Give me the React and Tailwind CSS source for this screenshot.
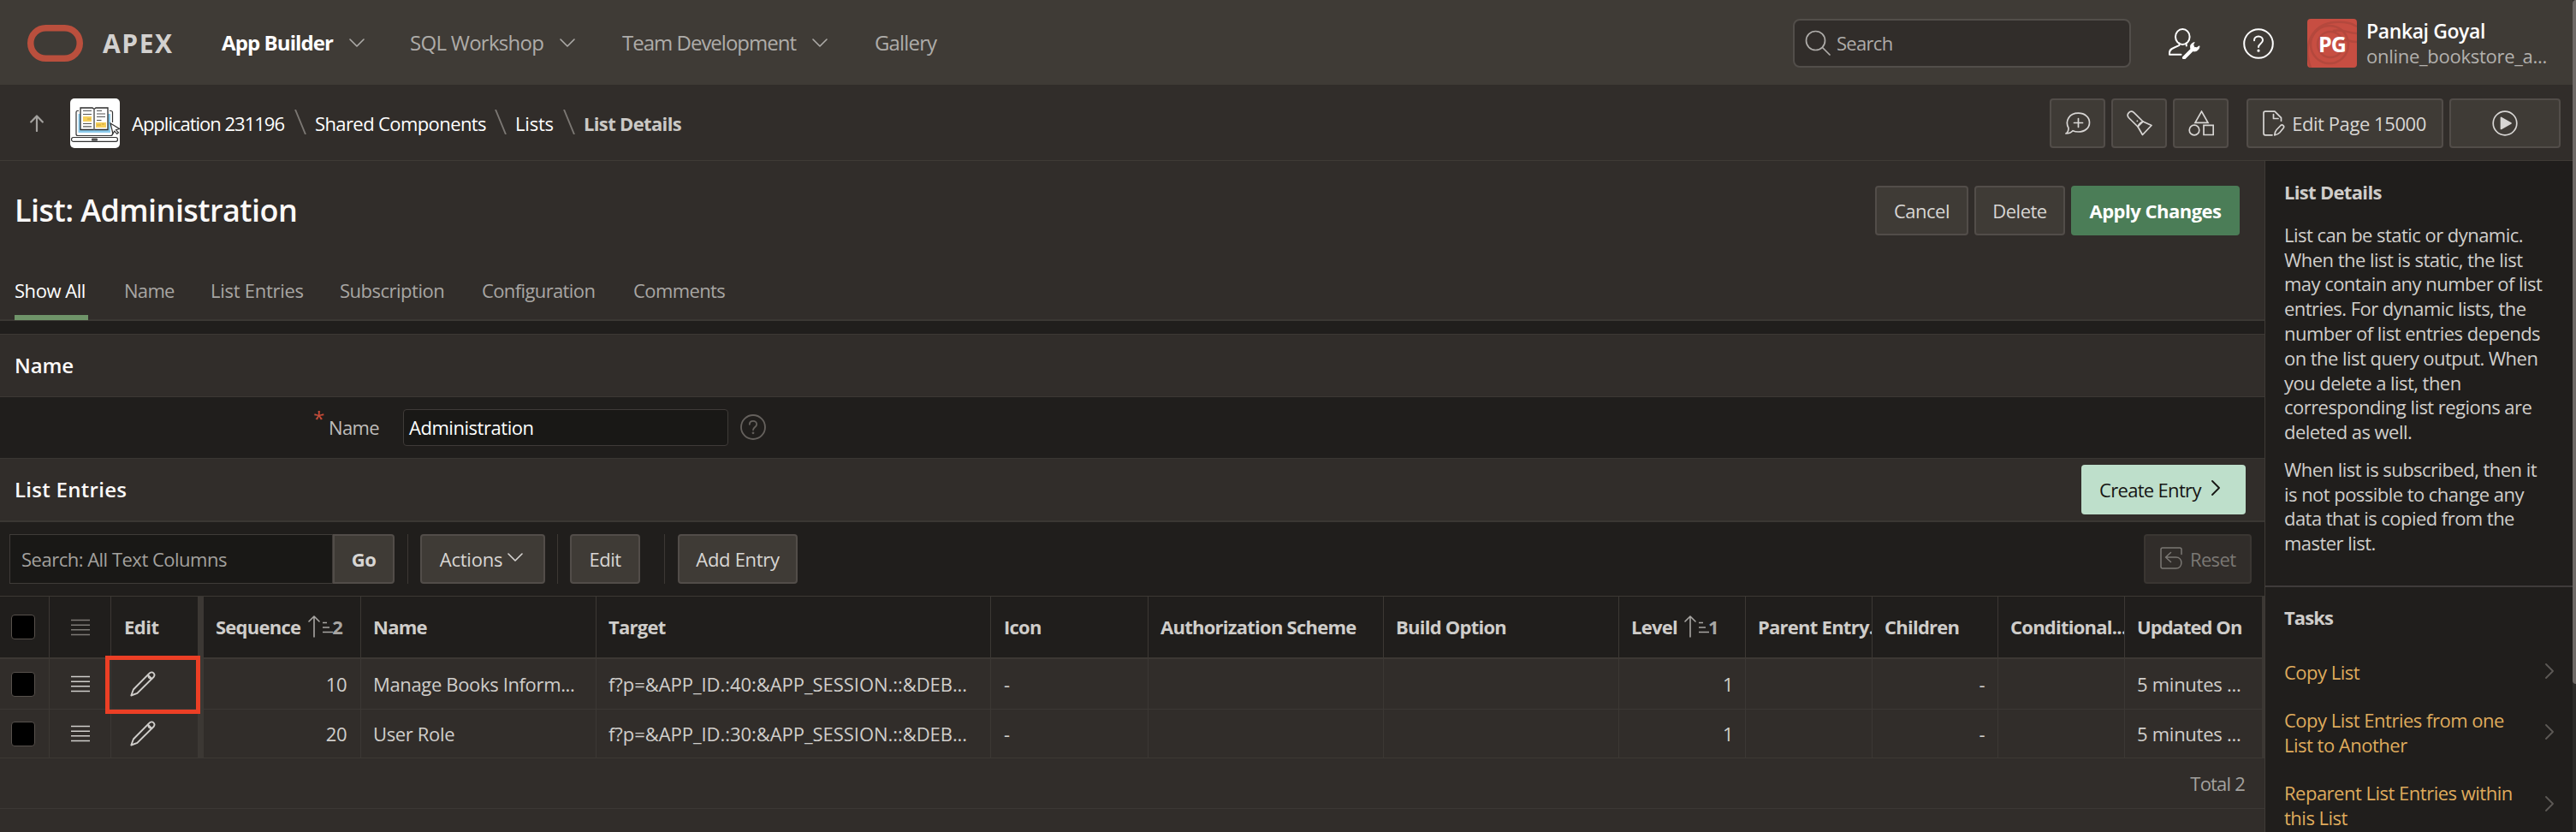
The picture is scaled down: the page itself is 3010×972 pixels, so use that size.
import React from "react";

const Svg = ({ className, children, box = "0 0 24 24", sw = 1.5 }) => (
  <svg viewBox={box} className={`shrink-0 ${className}`} fill="none" stroke="currentColor" strokeWidth={sw} strokeLinecap="round" strokeLinejoin="round">
    {children}
  </svg>
);

const ChevronDown = ({ className }) => (
  <Svg box="0 0 18 10" sw={1.6} className={`h-[10px] w-[18px] ${className || ""}`}>
    <path d="M1 1l8 8 8-8" />
  </Svg>
);

const ChevronRight = ({ className }) => (
  <Svg box="0 0 10 18" sw={1.8} className={`h-[18px] w-[10px] ${className || ""}`}>
    <path d="M1 1l8 8-8 8" />
  </Svg>
);

const Help = ({ className, sw }) => (
  <Svg box="0 0 36 36" sw={sw} className={className}>
    <circle cx="18" cy="18" r="16.8" />
    <path d="M13 14.2c0-2.900 2.200-4.700 5-4.700s5 1.900 5 4.500c0 3.900-5 4-5 8" />
    <circle cx="18" cy="26.200" r="0.600" fill="currentColor" />
  </Svg>
);

const Pencil = () => (
  <Svg box="0 0 30 30" sw={1.900} className="h-[30px] w-[30px]">
    <path d="M1.300 28.500l2.600-7L23 2.200c3.300-2.300 7 1.200 4.700 4.600L8.400 25.900z" />
    <path d="M21 4.300l4.700 4.700M24.500 9c-2-.3-3.300-1.700-3.600-3.700" strokeWidth="1.300" />
  </Svg>
);

const Lines = ({ className = "" }) => (
  <Svg box="0 0 22 20" sw={1.500} className={`h-[20px] w-[22px] ${className}`}>
    <path d="M0 1.500h22M0 7.200h22M0 12.800h22M0 18.400h22" strokeLinecap="butt" />
  </Svg>
);

const SortAsc = ({ n, className }) => (
  <span className={`flex items-center text-[#a8a6a3] ${className}`}>
    <Svg box="0 0 30 26" sw={1.600} className="h-[26px] w-[30px]">
      <path d="M7 25V1.500M1 7l6-6 6 6" />
      <path d="M17 8.500h5M17 14h8M17 19.500h12" strokeLinecap="butt" />
    </Svg>
    <span className="-ml-[2px]">{n}</span>
  </span>
);

const Check = () => <span className="h-[29px] w-[28px] shrink-0 rounded-[4px] border border-[#57514c] bg-black" />;

const Btn = ({ className, children }) => (
  <button className={`flex h-[58px] shrink-0 items-center justify-center rounded-[4px] border-2 whitespace-nowrap ${className}`}>
    {children}
  </button>
);

const GREY = "border-[#524d49] bg-[#3f3b36] text-[#d8d6d4]";

const nav = [
  { label: "App Builder", cls: "mr-[18px] w-[131px] font-bold tracking-[-0.9px] text-white", gap: "mr-[53px]", menu: true },
  { label: "SQL Workshop", cls: "mr-[17px] w-[158px] tracking-[-0.72px] text-[#aeaca9]", gap: "mr-[55px]", menu: true },
  { label: "Team Development", cls: "mr-[17px] w-[205px] tracking-[-1px] text-[#aeaca9]", gap: "mr-[55px]", menu: true },
  { label: "Gallery", cls: "w-[74px] tracking-[-0.85px] text-[#aeaca9]" },
];

const tabs = [
  ["Show All", "w-[86px] border-[#6f9469] tracking-[-0.45px] text-white"],
  ["Name", "w-[59px] border-transparent tracking-[-0.7px] text-[#a8a6a3]"],
  ["List Entries", "w-[109px] border-transparent tracking-[-0.27px] text-[#a8a6a3]"],
  ["Subscription", "w-[124px] border-transparent tracking-[-0.5px] text-[#a8a6a3]"],
  ["Configuration", "w-[135px] border-transparent tracking-[-0.62px] text-[#a8a6a3]"],
  ["Comments", "w-[108px] border-transparent tracking-[-0.6px] text-[#a8a6a3]"],
];

const COLS = "grid-cols-[58px_72px_108px_184px_275px_461px_184px_275px_275px_148px_148px_147px_148px_163px]";

const rows = [
  { seq: "10", name: "Manage Books Inform...", target: "f?p=&APP_ID.:40:&APP_SESSION.::&DEB...", h: "h-[59px]", marked: true },
  { seq: "20", name: "User Role", target: "f?p=&APP_ID.:30:&APP_SESSION.::&DEB...", h: "h-[57px]" },
];

const Th = ({ children, className = "border-r pl-[14px]" }) => (
  <div className={`flex min-w-0 items-center overflow-hidden border-[#3c3834] whitespace-nowrap ${className}`}>{children}</div>
);

const Td = ({ children, className = "border-r pl-[14px]" }) => (
  <div className={`flex min-w-0 items-center border-[#3c3834] whitespace-nowrap ${className}`}>{children}</div>
);

const AppIcon = () => (
  <svg viewBox="0 0 58 58" className="mr-[14px] h-[58px] w-[58px] shrink-0 rounded-[5px] bg-white">
    <path d="M10 14.500H8.500Q7 14.500 7 16v25.500q0 2 2 2h38q2.500 0 2.500-2V36M46 14.500h1.500q2 0 2 2V28" fill="none" stroke="#333" strokeWidth="1.200" />
    <path d="M9.500 18h37.500v22H9.500z" fill="#8ccbec" />
    <path d="M12 11h14l2 1.500 2-1.500h14v25.500H12z" fill="#fff" stroke="#2c2c2c" strokeWidth="1.300" />
    <path d="M28 12.500v24" stroke="#777" strokeWidth="1.800" />
    <path d="M15 14.500h10M15 18.500h10M15 29.500h10M15 32.800h10M31 14.500h6M31 18h10M31 21.500h10M31 25.500h5.500" stroke="#555" strokeWidth="1.200" />
    <path d="M15 21h10v6H15zM30 28h12v6H30z" fill="#f6cf5b" />
    <path d="M20 24h4M31 31h5M37 30h3" stroke="#c9a23c" strokeWidth="1" />
    <rect x="1.500" y="45.500" width="54" height="4.800" rx="2.400" fill="#fff" stroke="#333" strokeWidth="1.200" />
    <rect x="25" y="46.500" width="7" height="3.200" rx="1" fill="#555" />
    <path d="M47 29l10.500 6.500-4 1.300 3 3.200-1.800 1.500-3-3.300-1.700 3z" fill="#fff" stroke="#333" strokeWidth="1.200" />
  </svg>
);

const Slash = () => (
  <svg viewBox="0 0 14 29" className="mx-[10px] -mt-[3px] h-[29px] w-[14px] shrink-0 text-[#7b7773]">
    <path d="M1 0l12 29" stroke="currentColor" strokeWidth="1.900" />
  </svg>
);

const Logo = () => (
  <svg viewBox="0 0 65 43" className="h-[43px] w-[65px] shrink-0">
    <rect x="3.750" y="3.750" width="57.500" height="35.500" rx="17.750" fill="none" stroke="#ba4f3d" strokeWidth="7.500" />
  </svg>
);

const Avatar = () => (
  <div className="relative mr-[11px] h-[57px] w-[58px] shrink-0 overflow-hidden rounded-[4px] bg-[#c74e42]">
    <svg viewBox="0 0 58 57" className="h-full w-full" fill="none" stroke="#b4483d" strokeWidth="2.500">
      <circle cx="27" cy="30" r="15" />
      <circle cx="26" cy="30" r="22" />
      <path d="M4 57C-6 30 6 6 32 4s22 8 30 4M30 14c14-3 18 4 30 3M34 24c8-2 16 4 26 3" />
    </svg>
    <span className="absolute inset-0 flex items-center justify-center pt-[2px] text-[25px] leading-none font-bold tracking-[-1px] text-white">PG</span>
  </div>
);

const Task = ({ children }) => (
  <li className="flex items-center justify-between py-[13.6px] pr-[22px] text-[#dfab5c]">
    <span className="w-[290px]">{children}</span>
    <ChevronRight className="-mt-[3px] text-[#5d5955]" />
  </li>
);

export default function App() {
  return (
    <div className="flex h-[972px] w-[3010px] overflow-hidden bg-[#201e1c] font-['Open_Sans',sans-serif] text-[22px] leading-[28.800px] tracking-[-0.5px] text-[#d0cecb]">
      <div className="flex w-[3006px] shrink-0 flex-col">
        <header className="flex h-[99px] shrink-0 items-center bg-[#3f3b36] pt-[2px] pl-[32px] whitespace-nowrap">
          <Logo />
          <span className="ml-[23px] w-[139px] text-[30px] leading-none font-bold tracking-[1.550px] text-[#d3d1cf]">APEX</span>
          <nav className="flex flex-1 items-center text-[24px]">
            {nav.map((n) => (
              <div key={n.label} className={`flex items-center ${n.gap || ""}`}>
                <span className={n.cls}>{n.label}</span>
                {n.menu && <ChevronDown className="text-[#aeaca9]" />}
              </div>
            ))}
          </nav>
          <div className="mr-[44px] flex h-[57px] w-[395px] items-center rounded-[8px] border-2 border-[#524e4a] bg-[#312d2a] pl-[12px] text-[#aeaca9]">
            <Svg box="0 0 30 30" sw={1.700} className="mr-[7px] h-[30px] w-[30px] -translate-y-px">
              <circle cx="12.500" cy="12.500" r="11" />
              <path d="M20.500 20.500l8.500 8.500" />
            </Svg>
            <span className="tracking-[-0.7px]">Search</span>
          </div>
          <Svg box="0 0 37 36" sw={2} className="mr-[50px] h-[36px] w-[37px] text-white">
            <ellipse cx="16.300" cy="10" rx="8.300" ry="9" />
            <path d="M12.500 17.500v2.300L3.800 24Q1 25.500 1 29v1.700h13.500M20.500 17.500l.3 3" />
            <path d="M18 34.500l9.500-9.500" strokeWidth="4" />
            <path d="M29.800 16.700c-3.600.8-5.200 4-3.800 7.300l2.600 2.800c4.200.5 7-1.500 7.400-6l-3.200 2-3.200-.6-.8-3z" fill="currentColor" strokeWidth="1" />
          </Svg>
          <Help sw={2} className="mr-[39px] h-[36px] w-[36px] text-white" />
          <Avatar />
          <div className="mr-[28px] w-[213px]">
            <div className="text-[23px] font-semibold tracking-[-0.4px] text-white">Pankaj Goyal</div>
            <div className="tracking-[-0.280px] text-[#b3b1ae]">online_bookstore_a...</div>
          </div>
        </header>

        <div className="flex h-[89px] shrink-0 items-center border-b border-[#3f3b36] bg-[#312d2a] pt-[2px] pl-[35px] whitespace-nowrap text-white">
          <Svg box="0 0 16 20" sw={2.200} className="mr-[31px] h-[20px] w-[16px] text-[#a3a19e]">
            <path d="M8 19V2M1.200 8.500L8 1.500l6.800 7" />
          </Svg>
          <AppIcon />
          <span className="w-[180px] tracking-[-1px]">Application 231196</span>
          <Slash />
          <span className="w-[200px] tracking-[-0.600px]">Shared Components</span>
          <Slash />
          <span className="w-[46px] tracking-[-0.200px]">Lists</span>
          <Slash />
          <span className="flex-1 font-bold tracking-[-0.650px] text-[#cbc9c6]">List Details</span>
          <div className="flex items-center gap-[7px] pr-[14px]">
            <Btn className={`w-[65px] ${GREY}`}>
              <Svg box="0 0 30 26" sw={1.700} className="h-[26px] w-[30px]">
                <path d="M1 25c2.300-1.400 3-3.300 3-6.300C-.5 10 5 1.200 15.500 1.200c7.500 0 13 4.600 13 11s-5.500 10.800-13 10.800c-2.600 0-4.500-.4-6.500-1.300C7 24 4.500 25 1 25z" />
                <path d="M15.500 7.500v10M10.500 12.500h10" />
              </Svg>
            </Btn>
            <Btn className={`w-[65px] ${GREY}`}>
              <Svg box="0 0 30 30" sw={1.700} className="h-[30px] w-[30px]">
                <path d="M2.300 8.500C-1 4.500 4-1 8.300 2.300L19 13l-6 6zM19 13l10 4.500L18.500 28.500 13 19" />
                <path d="M13 19c1.200-3.200 3-4.800 6-6M12.300 12.300h.1" />
              </Svg>
            </Btn>
            <Btn className={`w-[65px] ${GREY}`}>
              <Svg box="0 0 30 30" sw={1.700} className="h-[30px] w-[30px]">
                <path d="M15.500 1.200L23 14.300H8z" strokeLinejoin="miter" />
                <circle cx="7" cy="23" r="5.800" />
                <path d="M18 17.300h11.200v11.200H18z" strokeLinejoin="miter" />
              </Svg>
            </Btn>
            <Btn className={`ml-[14px] w-[230px] ${GREY}`}>
              <Svg box="0 0 26 30" sw={1.700} className="mr-[7px] h-[30px] w-[26px] -translate-x-px">
                <path d="M11 28.800H3q-2 0-2-2V3q0-1.800 2-1.800h11l7.500 7.500v3.500" />
                <path d="M12.500 4.500v5h5.500" />
                <path d="M13.800 28.800c.2-3 .8-4.600 2.400-6.300l4.800-5c2-1.600 4.700.8 3.200 3l-4.300 5.200c-1.700 1.900-3.200 2.700-6.100 3.100z" />
              </Svg>
              <span className="tracking-[-0.430px]">Edit Page 15000</span>
            </Btn>
            <Btn className={`w-[130px] ${GREY}`}>
              <Svg box="0 0 30 30" sw={1.700} className="h-[30px] w-[30px]">
                <circle cx="15" cy="15" r="13.800" />
                <path d="M10.500 8.500v13L22 15z" fill="currentColor" />
              </Svg>
            </Btn>
          </div>
        </div>

        <div className="flex min-h-0 flex-1">
          <main className="flex w-[2646px] shrink-0 flex-col">
            <div className="h-[187px] shrink-0 border-b-2 border-[#3a3733] bg-[#312d2a]">
              <div className="flex h-[116px] items-center gap-[7px] pr-[29px] pl-[17px]">
                <h1 className="flex-1 text-[36px] leading-none font-semibold tracking-[-0.560px] text-[#fbf9f8]">List: Administration</h1>
                <Btn className={`w-[109px] ${GREY}`}>Cancel</Btn>
                <Btn className={`w-[106px] ${GREY}`}>Delete</Btn>
                <Btn className="w-[197px] border-[#4b7d57] bg-[#4b7d57] font-bold text-white">Apply Changes</Btn>
              </div>
              <div className="flex h-[70px] gap-[42px] pl-[17px]">
                {tabs.map(([t, c]) => (
                  <div key={t} className={`flex h-[70px] items-center border-b-[6px] pt-[6px] whitespace-nowrap ${c}`}>{t}</div>
                ))}
              </div>
            </div>

            <div className="mt-[15px] flex h-[74px] shrink-0 items-center border-y border-[#3c3834] bg-[#312d2a] pl-[17px] text-[24px] font-semibold tracking-[-0.150px] text-[#fbf9f8]">Name</div>
            <div className="flex h-[71px] shrink-0 items-center pl-[366px]">
              <span className="w-[18px] -translate-y-[10px] text-[24px] text-[#c74e3b]">*</span>
              <label className="w-[87px] tracking-[-0.600px] text-[#bfbdba]">Name</label>
              <div className="mr-[14px] flex h-[43px] w-[380px] items-center rounded-[4px] border border-[#3f3b38] bg-[#191816] pl-[6px] tracking-[-0.460px] text-white">Administration</div>
              <Help sw={2.200} className="h-[30px] w-[30px] -translate-y-px text-[#65615d]" />
            </div>

            <div className="flex h-[75px] shrink-0 items-center justify-between border-t border-b-2 border-[#3a3733] bg-[#312d2a] pr-[22px] pl-[17px]">
              <h2 className="text-[24px] font-semibold tracking-[0.280px] text-[#fbf9f8]">List Entries</h2>
              <button className="flex h-[58px] w-[192px] items-center rounded-[4px] bg-[#bedfcb] pl-[21px] tracking-[-0.680px] text-[#161513]">
                Create Entry
                <ChevronRight className="-mt-[4px] ml-[12px]" />
              </button>
            </div>

            <div className="flex h-[86px] shrink-0 items-center pl-[11px]">
              <div className="flex h-[58px] w-[378px] items-center border border-[#3f3b38] bg-[#191816] pl-[13px] text-[#a3a19e]">Search: All Text Columns</div>
              <Btn className={`w-[72px] rounded-l-none font-bold ${GREY}`}>Go</Btn>
              <span className="mr-[14px] ml-[15px] h-[58px] w-px bg-[#3c3834]" />
              <Btn className={`w-[146px] pr-[3px] ${GREY}`}>
                <span className="mr-[6px] tracking-[-0.200px]">Actions</span>
                <ChevronDown className="-mt-[4px]" />
              </Btn>
              <span className="mr-[14px] ml-[14px] h-[58px] w-px bg-[#3c3834]" />
              <Btn className={`w-[82px] ${GREY}`}>Edit</Btn>
              <span className="mr-[15px] ml-[28px] h-[58px] w-px bg-[#3c3834]" />
              <Btn className={`w-[140px] tracking-[-0.300px] ${GREY}`}>Add Entry</Btn>
              <button className="mr-[15px] ml-auto flex h-[58px] w-[126px] items-center rounded-[4px] border-2 border-[#3a3632] bg-[#312d2a] pl-[17px] tracking-[-0.660px] text-[#7b7874]">
                <Svg box="0 0 26 26" sw={1.500} className="mr-[9px] -mt-[2px] h-[26px] w-[26px]">
                  <path d="M25 8.500V3q0-2-2-2H3Q1 1 1 3v20q0 2 2 2h15.500c8.500 0 8.500-13 0-13H7M12.500 6.500L6.500 12l6 5.500" />
                </Svg>
                Reset
              </button>
            </div>

            <div className={`grid h-[74px] shrink-0 ${COLS} border-t border-b-2 border-[#3c3834] font-bold tracking-[-0.750px] text-[#cfcdca]`}>
              <Th className="border-r pl-[13px]"><Check /></Th>
              <Th className="border-r pl-[25px]"><Lines className="text-[#7d7a76]" /></Th>
              <Th className="border-r-[7px] pl-[15px] tracking-[-0.500px]">Edit</Th>
              <Th>Sequence <SortAsc n="2" className="ml-[9px]" /></Th>
              <Th>Name</Th>
              <Th>Target</Th>
              <Th className="border-r pl-[15px]">Icon</Th>
              <Th>Authorization Scheme</Th>
              <Th>Build Option</Th>
              <Th>Level <SortAsc n="1" className="ml-[8px]" /></Th>
              <Th>Parent Entry...</Th>
              <Th>Children</Th>
              <Th>Conditional...</Th>
              <Th className="border-r-[3px] pl-[14px] tracking-[-0.950px]">Updated On</Th>
            </div>
            {rows.map((r) => (
              <div key={r.seq} className={`grid shrink-0 ${COLS} ${r.h} border-b border-[#3c3834] bg-[#312d2a] text-[#d0cecb]`}>
                <Td className="border-r pl-[13px]"><Check /></Td>
                <Td className="border-r pl-[25px]"><Lines /></Td>
                <Td className="relative border-r-[7px] pl-[22px]">
                  <Pencil />
                  {r.marked && <span className="absolute -top-[4px] -left-[7px] z-10 h-[68px] w-[111px] border-[5px] border-[#ec3f25]" />}
                </Td>
                <Td className="justify-end border-r pr-[16px]">{r.seq}</Td>
                <Td className="border-r pl-[14px] tracking-[-0.350px]">{r.name}</Td>
                <Td className="border-r pl-[14px] tracking-[-0.050px]">{r.target}</Td>
                <Td className="border-r pl-[15px]">-</Td>
                <Td />
                <Td />
                <Td className="justify-end border-r pr-[14px]">1</Td>
                <Td />
                <Td className="justify-end border-r pr-[15px]">-</Td>
                <Td />
                <Td className="border-r-[3px] pl-[14px] tracking-[-0.270px]">5 minutes ...</Td>
              </div>
            ))}
            <div className="flex h-[59px] shrink-0 items-center justify-end border-b border-[#3c3834] bg-[#312d2a] pr-[23px] tracking-[-0.800px] text-[#a3a19e]">Total 2</div>
            <div className="flex-1 bg-[#312d2a]" />
          </main>

          <aside className="w-[360px] shrink-0 border-l border-[#3f3b36]">
            <section className="h-[498px] border-b-2 border-[#3f3b3a] pt-[22px] pl-[22px]">
              <h3 className="font-bold tracking-[-0.680px] text-[#cfcdca]">List Details</h3>
              <p className="mt-[21px] w-[309px] tracking-[-0.540px]">
                List can be static or dynamic. When the list is static, the list may contain any number of list entries. For dynamic lists, the number of list entries depends on the list query output. When you delete a list, then corresponding list regions are deleted as well.
              </p>
              <p className="mt-[14.800px] w-[309px] tracking-[-0.540px]">When list is subscribed, then it is not possible to change any data that is copied from the master list.</p>
            </section>
            <section className="pt-[21px] pl-[22px]">
              <h3 className="mb-[22px] font-bold tracking-[-0.900px] text-[#cfcdca]">Tasks</h3>
              <ul>
                <Task>Copy List</Task>
                <Task>Copy List Entries from one List to Another</Task>
                <Task>Reparent List Entries within this List</Task>
              </ul>
            </section>
          </aside>
        </div>
      </div>
      <div className="w-[4px] shrink-0 bg-[#2c2a28]">
        <div className="h-[799px] rounded-l-[4px] bg-[#6e6966]" />
      </div>
    </div>
  );
}
